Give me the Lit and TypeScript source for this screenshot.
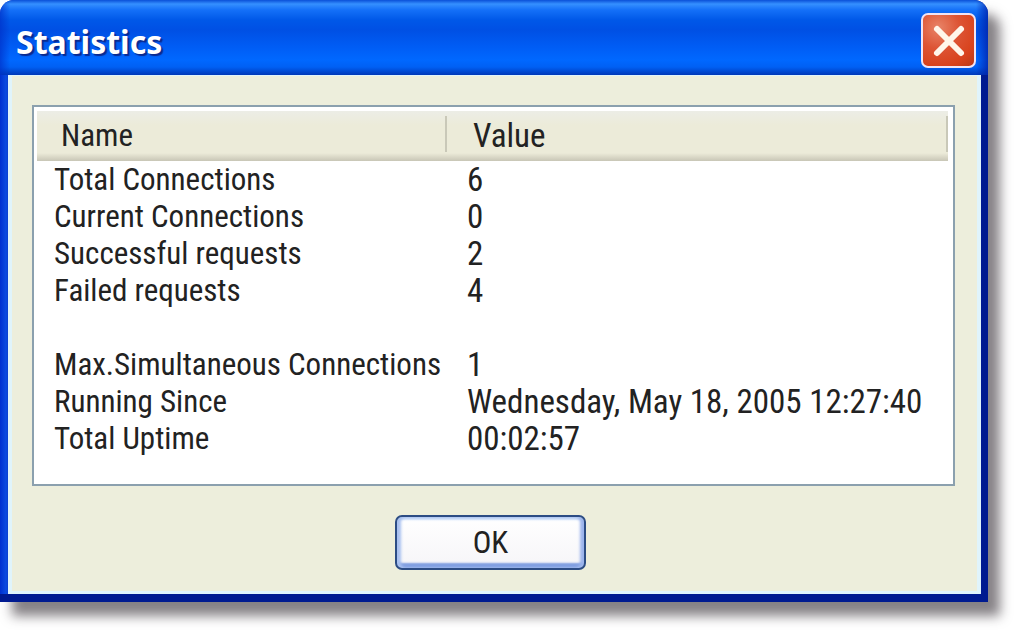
import { LitElement, html, css } from "lit";
import { customElement, property, state } from "lit/decorators.js";

interface Stat {
  name: string;
  value: string;
}

@customElement("stats-table")
class StatsTable extends LitElement {
  @property({ attribute: false }) rows: Stat[] = [];

  static styles = css`
    :host {
      display: block;
      box-sizing: border-box;
      padding: 4px 5px 27px 3px;
      border: 2px solid #8ba0ae;
      background: #fff;
    }
    .table {
      width: 100%;
      border-collapse: separate;
      border-spacing: 0;
      table-layout: fixed;
    }
    .name-col {
      width: 45%;
    }
    .head {
      height: 50px;
      padding: 0 0 0 24px;
      box-sizing: border-box;
      text-align: left;
      font-weight: 400;
      line-height: 36px;
      background:
        linear-gradient(#c9c8b8, #c9c8b8) right 0 top 5px / 2px 36px no-repeat,
        linear-gradient(#ecede6 0, #ecebd9 14px, #ecebd9 42px, #c8c6b6 50px);
    }
    .cell {
      height: 37px;
      padding: 0 0 0 17px;
      line-height: 37px;
      white-space: nowrap;
    }
    .value {
      padding-left: 20px;
      font-size: 33px;
    }
    .head.value {
      padding-left: 26px;
    }
  `;

  render() {
    return html`
      <table class="table" aria-label="Statistics">
        <colgroup>
          <col class="name-col" />
          <col />
        </colgroup>
        <thead>
          <tr>
            <th class="head" scope="col">Name</th>
            <th class="head value" scope="col">Value</th>
          </tr>
        </thead>
        <tbody>
          ${this.rows.map(
            (r) => html`<tr>
              <td class="cell">${r.name}</td>
              <td class="cell value">${r.value}</td>
            </tr>`
          )}
        </tbody>
      </table>
    `;
  }
}

@customElement("app-root")
class AppRoot extends LitElement {
  @state() private stats: Stat[] = [
    { name: "Total Connections", value: "6" },
    { name: "Current Connections", value: "0" },
    { name: "Successful requests", value: "2" },
    { name: "Failed requests", value: "4" },
    { name: "", value: "" },
    { name: "Max.Simultaneous Connections", value: "1" },
    { name: "Running Since", value: "Wednesday, May 18, 2005 12:27:40" },
    { name: "Total Uptime", value: "00:02:57" },
  ];

  static styles = css`
    :host {
      display: block;
      padding: 0 32px 32px 0;
      background: #fff;
      color: #222;
      font: 31px "Roboto Condensed", "Roboto", "Liberation Sans", sans-serif;
    }
    .window {
      padding-bottom: 8px;
      border-radius: 14px 14px 0 0;
      background:
        linear-gradient(#001a90, #001a90) bottom / 100% 8px no-repeat,
        linear-gradient(90deg, #0030d0 0, #0a4be0 6px, #0b3fd0 8px, #001c98 50%, #001a90 100%);
      box-shadow: 12px 14px 12px rgba(40, 32, 40, 0.56);
    }
    .titlebar {
      display: flex;
      align-items: center;
      justify-content: space-between;
      box-sizing: border-box;
      height: 75px;
      padding: 6px 12px 0 16px;
      border-radius: 14px 14px 0 0;
      background:
        linear-gradient(90deg, #0030c8b0 0, #0040e000 10px, #0040e000 calc(100% - 12px), #0020a8c0 100%),
        linear-gradient(#0a50d8 0, #3590ff 4px, #1470f8 10px, #0058e8 20px, #0050e4 30px, #005cf4 46px, #0068ff 60px, #0060f4 67px, #0038b8 75px);
    }
    .title {
      margin: 0;
      padding-top: 2px;
      color: #fff;
      font: bold 32px/46px "Noto Sans", "Open Sans", sans-serif;
      text-shadow: 2px 2px 1px #0a2a90;
    }
    .close {
      display: grid;
      place-items: center;
      width: 55px;
      height: 55px;
      padding: 0;
      border: 2px solid #f0e4f4;
      border-radius: 7px;
      background: radial-gradient(circle at 30% 25%, #e88468 0, #dd5434 40%, #d8421c 75%, #b83818 100%);
    }
    .body {
      margin: 0 7px 0 8px;
      padding: 29px 22px 21px 20px;
      border: solid #e0f4fc;
      border-width: 1px 4px 3px 4px;
      background: #edeedc;
    }
    .actions {
      display: flex;
      justify-content: center;
      padding: 29px 6px 0 0;
    }
    .ok {
      box-sizing: border-box;
      width: 191px;
      height: 55px;
      padding: 0;
      border: 2px solid #2c4c84;
      border-radius: 7px;
      color: inherit;
      font: inherit;
      line-height: 36px;
      background: linear-gradient(#fff, #f6f5f8);
      box-shadow:
        inset 4px 0 3px #a8c0f0,
        inset -4px 0 3px #9cb4ec,
        inset 0 3px 2px #cfe0fa,
        inset 0 -5px 2px #7f9de0;
    }
  `;

  render() {
    return html`
      <main class="window" role="dialog" aria-labelledby="title">
        <header class="titlebar">
          <h1 class="title" id="title">Statistics</h1>
          <button class="close" type="button" aria-label="Close">
            <svg width="34" height="34" viewBox="0 0 34 34" fill="none" stroke="#fff6ea" stroke-width="6" stroke-linecap="round">
              <path d="M5 5L29 29M29 5L5 29" />
            </svg>
          </button>
        </header>
        <section class="body">
          <stats-table .rows=${this.stats}></stats-table>
          <div class="actions">
            <button class="ok" type="button">OK</button>
          </div>
        </section>
      </main>
    `;
  }
}
